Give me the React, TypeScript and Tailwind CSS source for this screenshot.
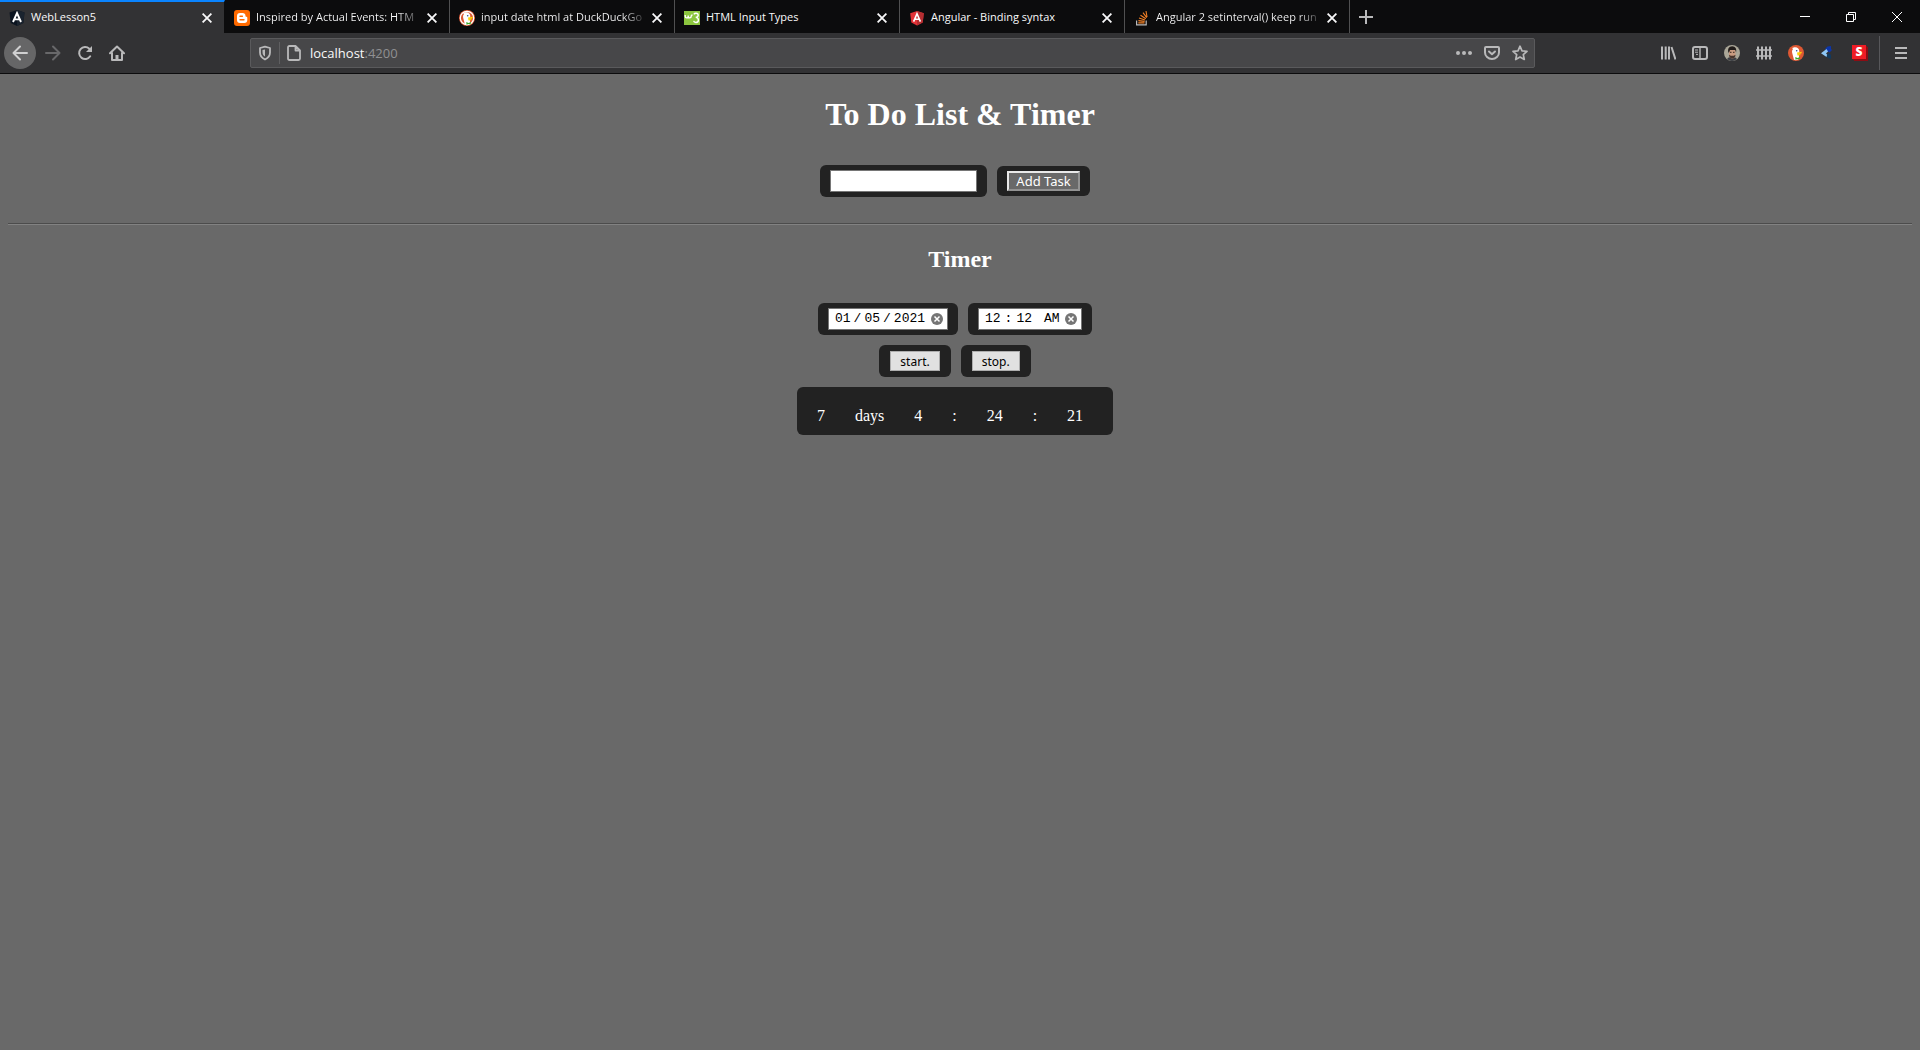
import React from "react";

const tabs = [
  { title: "WebLesson5", icon: <AngularDark />, active: true },
  { title: "Inspired by Actual Events: HTM", icon: <Blogger /> },
  { title: "input date html at DuckDuckGo", icon: <Duck ring /> },
  { title: "HTML Input Types", icon: <W3 /> },
  { title: "Angular - Binding syntax", icon: <AngularRed /> },
  { title: "Angular 2 setinterval() keep run", icon: <Stack /> },
];

function AngularDark() {
  return (
    <svg width="16" height="16" viewBox="0 0 16 16">
      <path d="M8 0 15.5 2.6 14.3 13 8 16 1.7 13 .5 2.6Z" fill="#0b1420" />
      <path d="M8 0 15.5 2.6 14.3 13 8 16Z" fill="#1a232e" />
      <path d="M4 12 8 3l4 9M5.6 9.4h4.8" fill="none" stroke="#fff" strokeWidth="1.9" />
    </svg>
  );
}

function AngularRed() {
  return (
    <svg width="16" height="16" viewBox="0 0 16 16">
      <path d="M8 1 14.8 3.3 13.7 12.4 8 15.6 2.3 12.4 1.2 3.3Z" fill="#e23237" />
      <path d="M8 1 14.8 3.3 13.7 12.4 8 15.6Z" fill="#b52e31" />
      <path d="M4.6 11.6 8 3.8l3.4 7.8M6 9.3h4" fill="none" stroke="#fff" strokeWidth="1.6" />
    </svg>
  );
}

function Blogger() {
  return (
    <svg width="16" height="16" viewBox="0 0 16 16">
      <rect width="16" height="16" rx="3" fill="#ff6a00" />
      <path d="M6 3h2.6a2.9 2.9 0 0 1 2.9 2.7c0 .9.3 1 .9 1s.9.4.9 1V10a3 3 0 0 1-3 3H6a3 3 0 0 1-3-3V6a3 3 0 0 1 3-3Z" fill="#fff" />
      <path d="M6 6.2h2.4M6 9.8h4" stroke="#ff6a00" strokeWidth="1.4" strokeLinecap="round" />
    </svg>
  );
}

function Duck({ ring = false }: { ring?: boolean }) {
  return (
    <svg width="16" height="16" viewBox="0 0 16 16">
      <circle cx="8" cy="8" r="8" fill="#de5833" />
      {ring && <circle cx="8" cy="8" r="6.7" fill="none" stroke="#fff" strokeWidth="1.2" />}
      <path d="M4.2 3 6.5 2.2C9.8 2 11.3 3.8 11.3 6.3L10.8 9.5 11.2 14 8 15.3 6 14.8 4.6 9.5C3.8 6.8 3.8 5.2 5 4.3Z" fill="#fff" />
      <path d="M9 7.6 14 6.8 13.3 8.4 11.2 9 13.2 9.9 9.5 10.6Z" fill="#fdd20a" />
      <path d="M7.3 12 9.5 13 12 12 11.6 14.6 9.5 14 7.5 14.8Z" fill="#3ca82b" />
      <circle cx="8.7" cy="5.7" r=".8" fill="#2d4f8e" />
    </svg>
  );
}

function W3() {
  return (
    <svg width="16" height="16" viewBox="0 0 16 16">
      <rect y="1" width="16" height="14" fill="#8cc63f" />
      <path
        d="M1.2 5v1.3q0 1.6 1.5 1.6T4.2 6.300V5.4M4.2 6.300q0 1.6 1.5 1.6T7.2 6.300Q7.2 5 8.5 5M9.8 4.3q.7-1 2.2-1 2.2 0 2.2 1.9 0 1.7-2.4 2.2 2.6.3 2.6 2.6 0 2.5-2.5 2.5-1.8 0-2.3-1.6"
        fill="none"
        stroke="#fff"
        strokeWidth="1.4"
      />
    </svg>
  );
}

function Stack() {
  return (
    <svg width="16" height="16" viewBox="0 0 16 16" fill="none">
      <path d="M2.6 10.5v4.3h9.6v-4.3" stroke="#bcbbbb" strokeWidth="1.2" />
      <path d="M4.3 12.9h6.2M4.4 10.6l6.2.8M5 8l6 2M6.5 5.2l5.3 3.5M9 2.7l3.7 5M12 1l1 6" stroke="#f48024" strokeWidth="1.1" />
    </svg>
  );
}

function Cross() {
  return (
    <svg width="10" height="10" viewBox="0 0 10 10" stroke="#f9f9fa" strokeWidth="1.8">
      <path d="M.6.6l8.8 8.8M9.4.6.6 9.4" />
    </svg>
  );
}

function Icon({ children }: { children: React.ReactNode }) {
  return (
    <svg
      width="16"
      height="16"
      viewBox="0 0 16 16"
      fill="none"
      stroke="currentColor"
      strokeWidth="2"
      strokeLinecap="round"
      strokeLinejoin="round"
    >
      {children}
    </svg>
  );
}

function ToolButton({ label, children }: { label: string; children: React.ReactNode }) {
  return (
    <button aria-label={label} className="flex size-8 items-center justify-center rounded-sm text-[#b9b9ba]">
      {children}
    </button>
  );
}

function TabStrip() {
  return (
    <header className="flex h-[33px] bg-[#0c0c0d]">
      {tabs.map((tab) => (
        <div
          key={tab.title}
          className={
            tab.active
              ? "flex w-[225px] items-center border-t-2 border-r border-t-[#0a84ff] border-r-[#0c0c0d] bg-[#323234] pl-[9px]"
              : "flex w-[225px] items-center border-r border-[#505051] pt-0.5 pl-[9px]"
          }
        >
          {tab.icon}
          <span
            className={
              tab.title.length > 25
                ? "ml-1.5 flex-1 whitespace-nowrap bg-linear-to-r from-[#f9f9fa] from-85% to-transparent to-100% bg-clip-text text-transparent"
                : "ml-1.5 flex-1 whitespace-nowrap text-[#f9f9fa]"
            }
          >
            {tab.title}
          </span>
          <button aria-label="Close tab" className="mr-1.5 flex w-5 justify-center pr-0.5">
            <Cross />
          </button>
        </div>
      ))}
      <button aria-label="New tab" className="flex w-8 items-center justify-center text-[#b9b9ba]">
        <svg width="14" height="14" viewBox="0 0 14 14" stroke="currentColor" strokeWidth="2">
          <path d="M7 0v14M0 7h14" />
        </svg>
      </button>
      <div className="ml-auto flex text-white">
        <button aria-label="Minimize" className="flex w-[46px] items-center justify-center">
          <svg width="10" height="10" viewBox="0 0 10 10" stroke="currentColor"><path d="M0 4.5h10" /></svg>
        </button>
        <button aria-label="Restore" className="flex w-[46px] items-center justify-center">
          <svg width="10" height="10" viewBox="0 0 10 10" fill="none" stroke="currentColor"><path d="M.5 2.5h7v7h-7zM2.5 2.5v-2h7v7h-2" /></svg>
        </button>
        <button aria-label="Close" className="flex w-[46px] items-center justify-center">
          <svg width="10" height="10" viewBox="0 0 10 10" stroke="currentColor"><path d="M0 0l10 10M10 0 0 10" /></svg>
        </button>
      </div>
    </header>
  );
}

function Toolbar() {
  return (
    <nav className="flex h-[41px] items-center border-b border-[#0c0c0d] bg-[#323234] pl-1 text-[#b9b9ba]">
      <button aria-label="Back" className="flex size-8 items-center justify-center rounded-full bg-[#666667] text-[#d0d0d1]">
        <Icon><path d="M15 8H1.5M8 1.5 1.5 8 8 14.5" /></Icon>
      </button>
      <button aria-label="Forward" disabled className="flex w-[34px] justify-center text-[#68686a]">
        <Icon><path d="M1 8h13.5M8 1.5 14.5 8 8 14.5" /></Icon>
      </button>
      <button aria-label="Reload" className="flex w-[30px] justify-center">
        <Icon>
          <path d="M13.2 11.3A6 6 0 1 1 12.3 3.7" />
          <path d="M15 1v6H9Z" fill="currentColor" stroke="none" />
        </Icon>
      </button>
      <button aria-label="Home" className="flex w-[34px] justify-center">
        <Icon>
          <path d="M1 8.2 8 1.5l7 6.7M3 8v7h10V8" />
          <path d="M8 14v-4" strokeWidth="3" strokeLinecap="butt" />
        </Icon>
      </button>
      <div className="ml-[116px] flex h-[30px] flex-1 items-center rounded-xs border border-[#5a5a5c] bg-[#474749]">
        <button aria-label="Site protection" className="flex w-7 justify-center">
          <Icon>
            <path d="M8 1.6 13 3v4.5c0 3.3-2 5.6-5 7-3-1.4-5-3.7-5-7V3Z" strokeWidth="1.8" />
            <path d="M8 4.5v7c-1.7-1-2.5-2.5-2.5-4.5V5Z" fill="currentColor" stroke="none" />
          </Icon>
        </button>
        <span className="h-[22px] w-px bg-[#5f5f61]" />
        <span className="flex w-7 justify-center">
          <Icon>
            <path d="M3.5 1H9.5l4.5 4.5V13.5q0 1.5-1.5 1.5h-9Q2 15 2 13.5v-11Q2 1 3.5 1ZM9.5 1V5.5H14" strokeWidth="1.8" />
          </Icon>
        </span>
        <a href="http://localhost:4200" className="ml-0.5 flex-1 pt-0.5 text-[13px] text-[#f9f9fa]">
          localhost<span className="text-[#909092]">:4200</span>
        </a>
        <button aria-label="Page actions" className="flex w-7 justify-center">
          <Icon><path d="M2 8h.01M8 8h.01M14 8h.01" strokeWidth="4" /></Icon>
        </button>
        <button aria-label="Save to Pocket" className="flex w-7 justify-center">
          <Icon>
            <path d="M2 2h12q1 0 1 1v4.5a7 6.5 0 0 1-14 0V3Q1 2 2 2ZM5 6.5 8 9.3l3-2.8" />
          </Icon>
        </button>
        <button aria-label="Bookmark" className="flex w-7 justify-center">
          <Icon><path d="M8 1.2 10 5.8l5 .5-3.7 3.3 1 4.9L8 12l-4.3 2.5 1-4.9L1 6.3l5-.5Z" strokeWidth="1.7" /></Icon>
        </button>
      </div>
      <div className="ml-[117px] flex items-center">
        <ToolButton label="Library">
          <Icon><path d="M2 1.5v13M5.700 1.5v13M9 1.5v13M11.5 2 15.5 14.5" strokeLinecap="butt" /></Icon>
        </ToolButton>
        <ToolButton label="Sidebar">
          <Icon>
            <rect x="1" y="2" width="14" height="12" rx="2" />
            <path d="M8 2v12" strokeWidth="1.4" />
            <path d="M3 5h3M3 7.2h3M4 9.4h2" strokeWidth="1" strokeLinecap="butt" />
          </Icon>
        </ToolButton>
        <ToolButton label="Account">
          <svg width="16" height="16" viewBox="0 0 16 16">
            <circle cx="8" cy="8" r="8" fill="#aaa698" />
            <path d="M3 14Q4.5 12 6.5 12h3q2 0 3.5 2A8 8 0 0 1 3 14Z" fill="#3c3f45" />
            <path d="M5 5h6.5v5q-.5 3.5-3.2 3.5T5 10Z" fill="#c99a80" />
            <path d="M4.3 7.5Q3 1.5 8.2 1.2q5 .3 3.9 6.3L11.2 5H6L5.1 7.5Z" fill="#211b19" />
            <path d="M5 9.8 6.8 10.8h3l1.7-1Q11.2 13.5 8.3 13.6 5.3 13.5 5 9.8Z" fill="#48352d" />
            <path d="M6 7.3h1.5M9 7.3h1.5" stroke="#3a2820" />
          </svg>
        </ToolButton>
        <ToolButton label="Containers">
          <Icon>
            <path d="M2 1.5v13M6 1.5v13M10 1.5v13M14 1.5v13" strokeLinecap="butt" />
            <path d="M0 5h16M0 11h16" strokeWidth="1.4" strokeLinecap="butt" />
          </Icon>
        </ToolButton>
        <ToolButton label="DuckDuckGo Privacy"><Duck /></ToolButton>
        <ToolButton label="Color tool">
          <svg width="16" height="16" viewBox="0 0 16 16">
            <path d="M5 4 7.5 1.5 11 1v3l1 1-2.5 2.5L7 6Z" fill="#0c35a8" />
            <path d="M1 8.2 6.5 4 8 6.5 6 8.5l2 2L6.5 12Z" fill="#8fc7f5" />
            <path d="M7.5 9 9 8l2 2v4l-3-1-1.5-1.5Z" fill="#12395c" />
          </svg>
        </ToolButton>
        <ToolButton label="S extension">
          <span className="flex size-4 items-start">
            <span className="flex size-3.5 items-center justify-center bg-[#ee1c25] text-xs font-black text-white shadow-[1px_1px_0_#8d0d14,2px_2px_0_#8d0d14]">S</span>
          </span>
        </ToolButton>
      </div>
      <span className="ml-[3px] h-[34px] w-px bg-[#57575a]" />
      <button aria-label="Menu" className="flex w-10 justify-center pl-0.5">
        <Icon><path d="M2 3h12M2 8h12M2 13h12" strokeLinecap="butt" /></Icon>
      </button>
    </nav>
  );
}

function ClearButton({ label }: { label: string }) {
  return (
    <button aria-label={label}>
      <svg width="12" height="12" viewBox="0 0 12 12">
        <circle cx="6" cy="6" r="6" fill="#757575" />
        <path d="M3.5 3.5l5 5M8.5 3.5l-5 5" stroke="#fff" strokeWidth="1.5" />
      </svg>
    </button>
  );
}

const panel = "flex rounded-md bg-[#222]";
const field =
  "flex-1 min-w-0 bg-white font-['Liberation_Mono'] text-[13px] text-black outline-none [&::-webkit-calendar-picker-indicator]:hidden";
const action = "h-5 border border-[#adadad] bg-[#e1e1e1] px-[9px] pt-0.5 text-xs leading-none text-black";

export default function App() {
  const countdown = ["7", "days", "4", ":", "24", ":", "21"];
  return (
    <div className="flex min-h-screen flex-col bg-[#696969] font-['Open_Sans',sans-serif] text-[11px]">
      <TabStrip />
      <Toolbar />
      <main className="px-2 pt-[22px] font-['Liberation_Serif',serif] text-base text-white">
        <h1 className="text-center text-[32px] leading-9 font-bold">To Do List &amp; Timer</h1>
        <form className="mt-[33px] mr-2.5 flex items-center justify-center gap-2.5" onSubmit={(e) => e.preventDefault()}>
          <div className={`${panel} px-2.5 py-[5px]`}>
            <input aria-label="New task" className="h-[22px] w-[147px] border border-[#767676] bg-white px-1 text-[13px] text-black outline-none" />
          </div>
          <div className={`${panel} px-2.5 py-[5px]`}>
            <button className="h-5 w-[73px] border-2 border-t-[#e9e9e9] border-r-[#929292] border-b-[#929292] border-l-[#e9e9e9] bg-[#696969] pt-px font-['Noto_Sans'] text-[13px] leading-none">
              Add Task
            </button>
          </div>
        </form>
        <hr className="mt-[26px] border-t border-b border-t-[#4c4c4c] border-b-[#828282]" />
        <h2 className="mt-5 text-center text-2xl leading-7 font-bold">Timer</h2>
        <div className="mt-[30px] mr-2.5 flex justify-center gap-2.5">
          <div className={`${panel} px-2.5 py-[5px]`}>
            <div className="flex h-[22px] w-[120px] items-center border border-[#767676] bg-white pr-1 pl-[5px]">
              <input type="date" aria-label="Date" defaultValue="2021-01-05" className={`${field} [&::-webkit-datetime-edit-text]:px-[2px]`} />
              <ClearButton label="Clear date" />
            </div>
          </div>
          <div className={`${panel} px-2.5 py-[5px]`}>
            <div className="flex h-[22px] w-[104px] items-center border border-[#767676] bg-white pr-1 pl-[5px]">
              <input type="time" aria-label="Time" defaultValue="00:12" className={`${field} [&::-webkit-datetime-edit-text]:px-[3px]`} />
              <ClearButton label="Clear time" />
            </div>
          </div>
        </div>
        <div className="mt-2.5 mr-2.5 flex justify-center gap-2.5 font-['Noto_Sans']">
          <div className={`${panel} px-[11px] py-1.5`}>
            <button className={action}>start.</button>
          </div>
          <div className={`${panel} px-[11px] py-1.5`}>
            <button className={action}>stop.</button>
          </div>
        </div>
        <div className="mt-2.5 mr-2.5 flex justify-center">
          <div className={`${panel} pt-[17px] pb-[7px] pl-5`}>
            {countdown.map((part, i) => (
              <span key={i} className="mr-[30px]">{part}</span>
            ))}
          </div>
        </div>
      </main>
    </div>
  );
}
